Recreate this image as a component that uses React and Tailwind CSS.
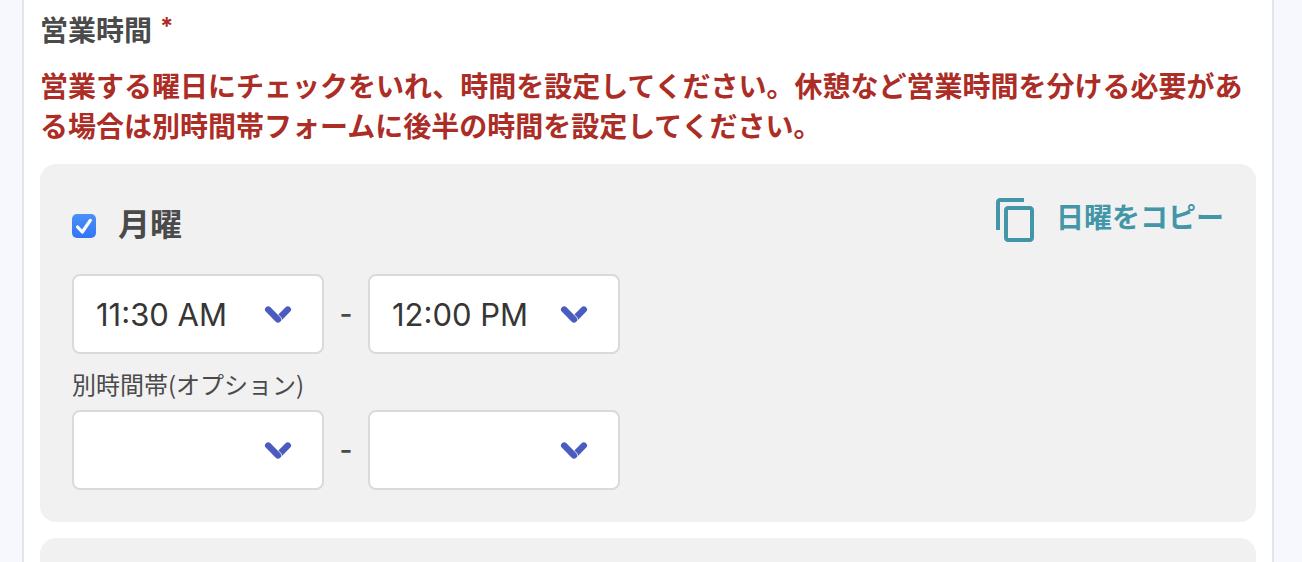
import { useState } from "react";

const TIMES = ["", "11:30 AM", "12:00 PM"];

function Chevron() {
  return (
    <svg
      className="pointer-events-none col-start-1 row-start-1 mr-8 self-center justify-self-end"
      width="28"
      height="18"
      viewBox="0 0 28 18"
      fill="none"
      strokeLinecap="round"
      aria-hidden="true"
    >
      <path d="M23.8 4.6L14 14.4" stroke="#4b5cc1" strokeWidth="6.4" />
      <path d="M4.2 4.6L14 14.4" stroke="#ffffff" strokeWidth="7.6" />
      <path d="M4.2 4.6L14 14.4" stroke="#4b5cc1" strokeWidth="6.4" />
    </svg>
  );
}

function TimeSelect({ label, initial }) {
  const [value, setValue] = useState(initial);
  return (
    <div className="grid w-[252px]">
      <select
        aria-label={label}
        value={value}
        onChange={(e) => setValue(e.target.value)}
        className="col-start-1 row-start-1 h-20 w-full appearance-none rounded-lg border-2 border-[#dadada] bg-white pl-[22px] pr-16 pt-[3px] font-['Inter','Noto_Sans_CJK_JP',sans-serif] text-[31px] text-[#363636]"
      >
        {TIMES.map((t) => (
          <option key={t} value={t}>
            {t}
          </option>
        ))}
      </select>
      <Chevron />
    </div>
  );
}

function TimeRange({ name, from, to }) {
  return (
    <div className="flex items-center">
      <TimeSelect label={`${name} 開始`} initial={from} />
      <span className="w-11 text-center font-['Inter',sans-serif] text-[28px] font-medium text-[#4a4a4a]">-</span>
      <TimeSelect label={`${name} 終了`} initial={to} />
    </div>
  );
}

function DayCheckbox({ id, label }) {
  const [checked, setChecked] = useState(true);
  return (
    <div className="flex h-[60px] items-center gap-[22px]">
      <span className="grid size-6">
        <input
          id={id}
          type="checkbox"
          checked={checked}
          onChange={(e) => setChecked(e.target.checked)}
          className="col-start-1 row-start-1 size-6 appearance-none rounded-[5px] border border-gray-400 bg-white checked:border-0 checked:bg-linear-to-b checked:from-[#4a90f8] checked:to-[#3375f6]"
        />
        {checked && (
          <svg
            className="pointer-events-none col-start-1 row-start-1"
            width="24"
            height="24"
            viewBox="0 0 24 24"
            fill="none"
            stroke="#ffffff"
            strokeWidth="3.2"
            strokeLinecap="round"
            strokeLinejoin="round"
            aria-hidden="true"
          >
            <path d="M5.600 13L10.300 18L18.300 6.400" />
          </svg>
        )}
      </span>
      <label htmlFor={id} className="pb-2 text-[32px] font-bold leading-10">
        {label}
      </label>
    </div>
  );
}

export default function App() {
  return (
    <div className="h-screen overflow-hidden bg-[#f6f8fd] pl-[22px] pr-7 font-['Noto_Sans_CJK_JP',sans-serif] text-[#4a4a4a]">
      <main className="min-h-full border-x-2 border-[#e4e5ea] bg-white px-4 pt-[9px]">
        <h2 className="flex gap-2 text-[28px] font-bold leading-10">
          営業時間
          <span className="font-['Inter',sans-serif] text-2xl leading-9 text-[#ab2d26]">*</span>
        </h2>
        <p className="mt-4 text-[28px] font-bold leading-10 text-[#ab2d26]">
          営業する曜日にチェックをいれ、時間を設定してください。休憩など営業時間を分ける必要がある場合は別時間帯フォームに後半の時間を設定してください。
        </p>
        <section className="mt-[19px] rounded-2xl bg-[#f1f1f1] p-8">
          <div className="flex items-start justify-between">
            <DayCheckbox id="monday" label="月曜" />
            <button type="button" className="flex gap-4 text-[28px] font-bold leading-10 text-[#4396a8]">
              <svg width="48" height="48" viewBox="0 0 24 24" fill="currentColor" aria-hidden="true">
                <path d="M16 1H4c-1.100 0-2 .9-2 2v14h2V3h12V1zm3 4H8c-1.100 0-2 .9-2 2v14c0 1.100.9 2 2 2h11c1.100 0 2-.9 2-2V7c0-1.100-.9-2-2-2zm0 16H8V7h11v14z" />
              </svg>
              日曜をコピー
            </button>
          </div>
          <div className="mt-[18px]">
            <TimeRange name="月曜" from="11:30 AM" to="12:00 PM" />
          </div>
          <p className="mb-[10px] mt-[14px] text-2xl leading-8">別時間帯(オプション)</p>
          <TimeRange name="月曜 別時間帯" from="" to="" />
        </section>
        <section className="mt-4 h-20 rounded-2xl bg-[#f1f1f1]" />
      </main>
    </div>
  );
}
